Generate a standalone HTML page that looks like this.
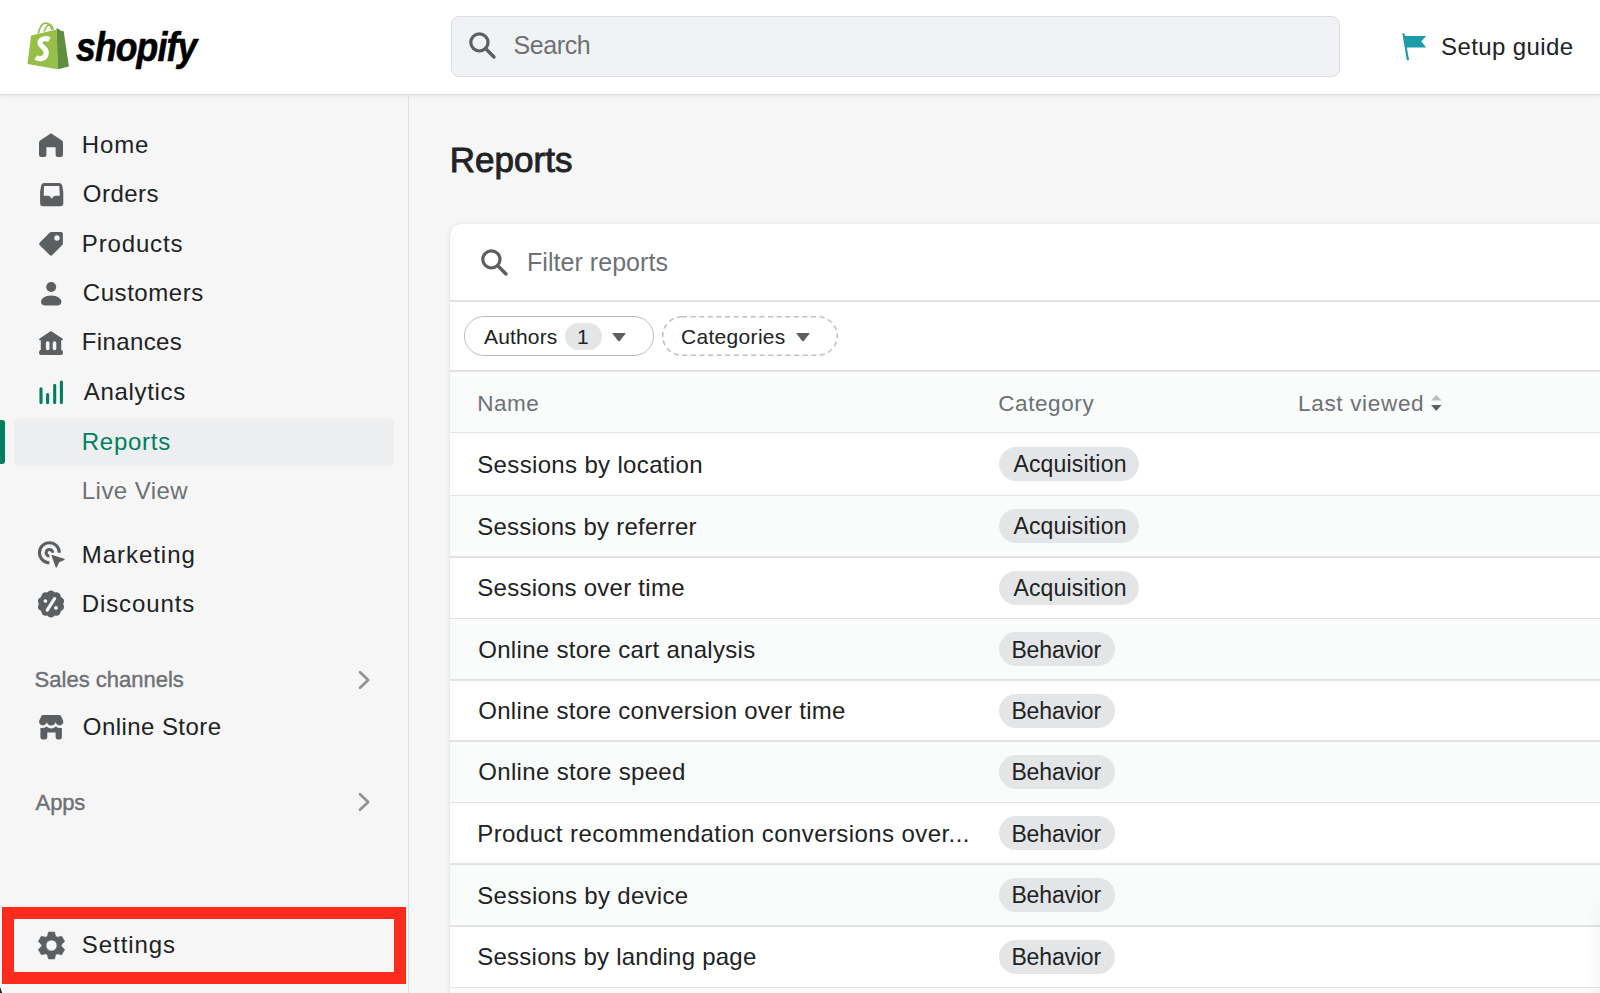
<!DOCTYPE html>
<html><head><meta charset="utf-8"><style>
*{margin:0;padding:0;box-sizing:border-box}
html,body{width:1600px;height:993px;overflow:hidden;background:#f6f6f7;font-family:"Liberation Sans", sans-serif;color:#202223}
.t{position:absolute;white-space:nowrap}
.ic{position:absolute;overflow:visible}
#topbar{position:absolute;left:0;top:0;width:1600px;height:94px;background:#fff;box-shadow:0 1px 0 #d9dbde,0 2px 4px rgba(0,0,0,0.08)}
#searchbox{position:absolute;left:450.5px;top:15.5px;width:889.5px;height:61px;background:#f1f2f3;border:1.5px solid #dadde1;border-radius:8px}
#sideline{position:absolute;left:408px;top:94px;width:1.2px;height:899px;background:#dcdee2}
#sel{position:absolute;left:14px;top:418px;width:380px;height:48px;background:#edeeef;border-radius:6px}
#bar{position:absolute;left:0;top:420px;width:5px;height:44px;background:#007f5f;border-radius:0 3px 3px 0}
#redbox{position:absolute;left:2px;top:907px;width:404px;height:77px;border:12px solid #fd2a1e}
#card{position:absolute;left:449.5px;top:223.5px;width:1200px;height:900px;background:#fff;border-radius:10.5px 0 0 0;box-shadow:0 0 1px rgba(63,63,68,0.25),0 1px 5px rgba(63,63,68,0.10)}
#thead{position:absolute;left:450px;top:371px;width:1150px;height:61.4px;background:#fafbfb}
.rowbg{position:absolute;left:450px;width:1150px;background:#fafbfb}
.div{position:absolute;left:450px;width:1150px;height:1.5px;background:#e1e3e5}
.badge{position:absolute;left:999px;height:34px;background:#e4e5e7;border-radius:17px}
#chip1{position:absolute;left:464.4px;top:315.8px;width:190px;height:40.2px;border:1.6px solid #babfc3;border-radius:21px}
#fab{position:absolute;left:1606px;top:895px;width:60px;height:150px;border-radius:30px;background:#fff;box-shadow:0 0 22px 4px rgba(0,0,0,0.07)}
#chip1b{position:absolute;left:564.6px;top:322.6px;width:37.4px;height:27px;background:#e4e5e7;border-radius:14px}
#chip2{position:absolute;left:662.4px;top:316.2px;width:176px;height:40px;overflow:visible}
#logo{position:absolute;left:76px;top:27.30px;font:italic 700 40px/1 "Liberation Sans",sans-serif;color:#000;letter-spacing:-1px;white-space:nowrap;-webkit-text-stroke:0.6px #000;transform:scaleX(0.89);transform-origin:0 0}
</style></head><body>
<div id="topbar"></div>
<div id="searchbox"></div>
<div id="sideline"></div>
<div id="sel"></div>
<div id="bar"></div>
<div id="redbox"></div>
<div id="card"></div>
<div id="thead"></div>
<div class="badge" style="top:446.95px;width:140px"></div>
<div class="rowbg" style="top:495.50px;height:61.30px"></div>
<div class="badge" style="top:509.15px;width:140px"></div>
<div class="badge" style="top:570.65px;width:140px"></div>
<div class="rowbg" style="top:618.50px;height:61.70px"></div>
<div class="badge" style="top:632.35px;width:116px"></div>
<div class="badge" style="top:693.60px;width:116px"></div>
<div class="rowbg" style="top:741.00px;height:61.60px"></div>
<div class="badge" style="top:754.80px;width:116px"></div>
<div class="badge" style="top:816.40px;width:116px"></div>
<div class="rowbg" style="top:864.20px;height:61.60px"></div>
<div class="badge" style="top:878.00px;width:116px"></div>
<div class="badge" style="top:939.65px;width:116px"></div>
<div class="rowbg" style="top:987.5px;height:10px"></div>
<div class="div" style="top:431.65px"></div>
<div class="div" style="top:494.75px"></div>
<div class="div" style="top:556.05px"></div>
<div class="div" style="top:617.75px"></div>
<div class="div" style="top:679.45px"></div>
<div class="div" style="top:740.25px"></div>
<div class="div" style="top:801.85px"></div>
<div class="div" style="top:863.45px"></div>
<div class="div" style="top:925.05px"></div>
<div class="div" style="top:986.75px"></div>
<div class="div" style="top:300.25px"></div>
<div class="div" style="top:370.25px"></div>
<div id="fab"></div>
<svg style="position:absolute;left:0;top:986px;width:4px;height:7px" viewBox="0 0 4 7"><path d="M0 1 L2.2 7 H0 Z" fill="#0b2338"/></svg>
<div id="chip1"></div>
<div id="chip1b"></div>
<svg id="chip2" viewBox="0 0 176 40"><rect x="0.75" y="0.75" width="174.5" height="38.5" rx="19.25" fill="none" stroke="#bec2c7" stroke-width="1.6" stroke-dasharray="5 3.6"/></svg>
<div id="logo">shopify</div>
<svg class="ic" style="left:39px;top:133px;width:24px;height:24px;" viewBox="0 0 24 24"><path fill="#5c5f62" d="M12 0.3 L22.9 7.4 Q24 8.1 24 9.5 V21.8 Q24 24 21.8 24 H18.6 Q16.6 24 16.6 22 V14.2 H7.4 V22 Q7.4 24 5.4 24 H2.2 Q0 24 0 21.8 V9.5 Q0 8.1 1.1 7.4 Z"/></svg>
<svg class="ic" style="left:39.5px;top:182.7px;width:23.4px;height:23.2px;" viewBox="0 0 24 24"><path fill="#5c5f62" fill-rule="evenodd" d="M4.5 0 H19.5 Q22.3 0 23 3 L24 9 V21 Q24 24 21 24 H3 Q0 24 0 21 V9 L1 3 Q1.7 0 4.5 0 Z M4.2 3 L3.6 13.3 H8.5 Q10.3 13.5 12 16.4 Q13.7 13.5 15.5 13.3 H20.4 L19.8 3 Z"/></svg>
<svg class="ic" style="left:39px;top:232.2px;width:24px;height:23.8px;" viewBox="0 0 24 24"><path fill="#5c5f62" fill-rule="evenodd" d="M12.3 0 H22.3 Q24 0 24 1.7 V11.8 Q24 12.6 23.4 13.2 L13.3 23.3 Q12 24.5 10.7 23.3 L0.7 13.3 Q-0.5 12 0.7 10.7 L10.8 0.6 Q11.4 0 12.3 0 Z M18 3.3 A2.7 2.7 0 1 0 18 8.7 A2.7 2.7 0 1 0 18 3.3 Z"/></svg>
<svg class="ic" style="left:40.9px;top:281.6px;width:20.4px;height:23.4px;" viewBox="0 0 20.4 23.4"><circle fill="#5c5f62" cx="10.2" cy="5" r="5"/><path fill="#5c5f62" d="M10.2 13.4 C16.5 13.4 20.4 16.6 20.4 19.6 Q20.4 23.4 16.8 23.4 H3.6 Q0 23.4 0 19.6 C0 16.6 3.9 13.4 10.2 13.4 Z"/></svg>
<svg class="ic" style="left:39px;top:331px;width:24px;height:24px;" viewBox="0 0 24 24"><path fill="#5c5f62" fill-rule="evenodd" d="M12 0 L23.4 7.6 Q24.4 8.4 23.6 9.2 H22.2 V19 H22.6 Q24 19.4 24 21.4 Q24 24 22 24 H2 Q0 24 0 21.4 Q0 19.4 1.4 19 H1.8 V9.2 H0.4 Q-0.4 8.4 0.6 7.6 Z M8.7 10.2 Q6.9 10.2 6.9 12 V17.5 Q6.9 19.3 8.7 19.3 Q10.5 19.3 10.5 17.5 V12 Q10.5 10.2 8.7 10.2 Z M15.5 10.2 Q13.7 10.2 13.7 12 V17.5 Q13.7 19.3 15.5 19.3 Q17.3 19.3 17.3 17.5 V12 Q17.3 10.2 15.5 10.2 Z"/></svg>
<svg class="ic" style="left:39px;top:380px;width:24.5px;height:24.5px;" viewBox="0 0 24.5 24.5"><g stroke="#007f5f" stroke-width="3.1" stroke-linecap="round"><line x1="2" y1="8.8" x2="2" y2="22.6"/><line x1="8.6" y1="14.6" x2="8.6" y2="22.6"/><line x1="15.7" y1="5.4" x2="15.7" y2="22.6"/><line x1="22.4" y1="2" x2="22.4" y2="22.6"/></g></svg>
<svg class="ic" style="left:34px;top:537px;width:34px;height:34px;" viewBox="0 0 34 34"><g fill="none" stroke="#5c5f62" stroke-width="3.1"><path d="M15.4 25.7 A9.95 9.95 0 1 1 25.35 15.75"/><path d="M15.4 19.0 A3.25 3.25 0 1 1 18.65 15.75"/></g><path fill="#5c5f62" stroke="#5c5f62" stroke-width="1.3" stroke-linejoin="round" d="M18.1 18.5 L30 22.3 L24.7 24.7 L22.3 30 Z"/></svg>
<svg class="ic" style="left:36.8px;top:589.5px;width:28px;height:28px;" viewBox="0 0 28 28"><path fill="#5c5f62" d="M14.00 0.55 L14.53 0.59 L15.05 0.69 L15.55 0.87 L16.04 1.11 L16.51 1.40 L16.95 1.73 L17.36 2.10 L17.74 2.49 L18.28 2.40 L18.83 2.34 L19.38 2.33 L19.93 2.37 L20.46 2.46 L20.97 2.62 L21.46 2.84 L21.91 3.12 L22.31 3.46 L22.67 3.85 L22.98 4.29 L23.23 4.77 L23.44 5.28 L23.59 5.81 L23.71 6.35 L23.79 6.89 L24.28 7.13 L24.76 7.41 L25.21 7.72 L25.63 8.07 L26.01 8.46 L26.33 8.89 L26.59 9.35 L26.79 9.84 L26.92 10.36 L26.98 10.88 L26.97 11.42 L26.89 11.96 L26.76 12.49 L26.58 13.01 L26.35 13.51 L26.10 14.00 L26.35 14.49 L26.58 14.99 L26.76 15.51 L26.89 16.04 L26.97 16.58 L26.98 17.12 L26.92 17.64 L26.79 18.16 L26.59 18.65 L26.33 19.11 L26.01 19.54 L25.63 19.93 L25.21 20.28 L24.76 20.59 L24.28 20.87 L23.79 21.11 L23.71 21.65 L23.59 22.19 L23.44 22.72 L23.23 23.23 L22.98 23.71 L22.67 24.15 L22.31 24.54 L21.91 24.88 L21.46 25.16 L20.97 25.38 L20.46 25.54 L19.93 25.63 L19.38 25.67 L18.83 25.66 L18.28 25.60 L17.74 25.51 L17.36 25.90 L16.95 26.27 L16.51 26.60 L16.04 26.89 L15.55 27.13 L15.05 27.31 L14.53 27.41 L14.00 27.45 L13.47 27.41 L12.95 27.31 L12.45 27.13 L11.96 26.89 L11.49 26.60 L11.05 26.27 L10.64 25.90 L10.26 25.51 L9.72 25.60 L9.17 25.66 L8.62 25.67 L8.07 25.63 L7.54 25.54 L7.03 25.38 L6.54 25.16 L6.09 24.88 L5.69 24.54 L5.33 24.15 L5.02 23.71 L4.77 23.23 L4.56 22.72 L4.41 22.19 L4.29 21.65 L4.21 21.11 L3.72 20.87 L3.24 20.59 L2.79 20.28 L2.37 19.93 L1.99 19.54 L1.67 19.11 L1.41 18.65 L1.21 18.16 L1.08 17.64 L1.02 17.12 L1.03 16.58 L1.11 16.04 L1.24 15.51 L1.42 14.99 L1.65 14.49 L1.90 14.00 L1.65 13.51 L1.42 13.01 L1.24 12.49 L1.11 11.96 L1.03 11.42 L1.02 10.88 L1.08 10.36 L1.21 9.84 L1.41 9.35 L1.67 8.89 L1.99 8.46 L2.37 8.07 L2.79 7.72 L3.24 7.41 L3.72 7.13 L4.21 6.89 L4.29 6.35 L4.41 5.81 L4.56 5.28 L4.77 4.77 L5.02 4.29 L5.33 3.85 L5.69 3.46 L6.09 3.12 L6.54 2.84 L7.03 2.62 L7.54 2.46 L8.07 2.37 L8.62 2.33 L9.17 2.34 L9.72 2.40 L10.26 2.49 L10.64 2.10 L11.05 1.73 L11.49 1.40 L11.96 1.11 L12.45 0.87 L12.95 0.69 L13.47 0.59 Z"/><line x1="17.6" y1="8.6" x2="10.2" y2="20.2" stroke="#f6f6f7" stroke-width="3.2" stroke-linecap="round"/><circle cx="8.4" cy="11" r="1.85" fill="#f6f6f7"/><circle cx="19" cy="17.9" r="1.85" fill="#f6f6f7"/></svg>
<svg class="ic" style="left:38.9px;top:714.5px;width:24.4px;height:24.4px;" viewBox="0 0 24.4 24.4"><path fill="#5c5f62" d="M4 0 H20.2 Q21.5 0 22 1 L24.1 5.6 Q24.8 7.8 23.6 9.1 Q22.3 10.4 20.4 10.4 Q18.2 10.4 17 8.3 L16.5 7.0 Q16 10.4 12.2 10.4 Q8.4 10.4 7.9 7.0 L7.4 8.3 Q6.2 10.4 4 10.4 Q2.1 10.4 0.8 9.1 Q-0.4 7.8 0.3 5.6 L2.4 1 Q2.9 0 4 0 Z"/><path fill="#5c5f62" d="M1.4 12.8 Q5 13.6 7.6 11.4 Q9.6 13.4 12.2 13.4 Q14.8 13.4 16.8 11.4 Q19.4 13.6 22.9 12.8 V22.3 Q22.9 24.4 20.8 24.4 H18.7 Q16.6 24.4 16.6 22.3 V17.6 H8.3 V22.3 Q8.3 24.4 6.2 24.4 H3.4 Q1.4 24.4 1.4 22.3 Z"/></svg>
<svg class="ic" style="left:36.6px;top:930.9px;width:29px;height:29px;" viewBox="0 0 28 28"><path fill="#5c5f62" fill-rule="evenodd" stroke="#5c5f62" stroke-width="0.6" stroke-linejoin="round" d="M10.27 4.08 L11.10 1.02 L16.90 1.02 L17.73 4.08 Q18.20 6.73 20.72 5.81 L23.79 5.00 L26.69 10.02 L24.46 12.27 Q22.40 14.00 24.46 15.73 L26.69 17.98 L23.79 23.00 L20.72 22.19 Q18.20 21.27 17.73 23.92 L16.90 26.98 L11.10 26.98 L10.27 23.92 Q9.80 21.27 7.28 22.19 L4.21 23.00 L1.31 17.98 L3.54 15.73 Q5.60 14.00 3.54 12.27 L1.31 10.02 L4.21 5.00 L7.28 5.81 Q9.80 6.73 10.27 4.08 Z M14 8.7 A5.3 5.3 0 1 0 14 19.3 A5.3 5.3 0 1 0 14 8.7 Z"/></svg>
<svg class="ic" style="left:357px;top:669.5px;width:15px;height:20px;" viewBox="0 0 15 20"><path d="M3 2.2 L11.2 10 L3 17.8" fill="none" stroke="#8c9196" stroke-width="2.6" stroke-linecap="round" stroke-linejoin="round"/></svg>
<svg class="ic" style="left:357px;top:792px;width:15px;height:20px;" viewBox="0 0 15 20"><path d="M3 2.2 L11.2 10 L3 17.8" fill="none" stroke="#8c9196" stroke-width="2.6" stroke-linecap="round" stroke-linejoin="round"/></svg>
<svg class="ic" style="left:469px;top:32.4px;width:27px;height:27px;" viewBox="0 0 27 27"><circle cx="10.4" cy="10.4" r="8.6" fill="none" stroke="#5c5f62" stroke-width="3.2"/><line x1="16.8" y1="16.8" x2="25" y2="25" stroke="#5c5f62" stroke-width="3.4" stroke-linecap="round"/></svg>
<svg class="ic" style="left:481px;top:249px;width:27px;height:27px;" viewBox="0 0 27 27"><circle cx="10.4" cy="10.4" r="8.6" fill="none" stroke="#5c5f62" stroke-width="3.2"/><line x1="16.8" y1="16.8" x2="25" y2="25" stroke="#5c5f62" stroke-width="3.4" stroke-linecap="round"/></svg>
<svg class="ic" style="left:1402px;top:32.5px;width:25px;height:27.5px;" viewBox="0 0 25 27.5"><path fill="#1c9ba8" d="M0.3 0 L2.4 0.4 L3 3 H24.2 L19.3 8.6 L24.2 14.6 H4.8 L7 26.4 Q7.1 27.5 6 27.5 Q5 27.5 4.7 26.5 Z"/></svg>
<svg class="ic" style="left:612px;top:332.6px;width:14px;height:8.6px;" viewBox="0 0 14 8.6"><path fill="#5c5f62" d="M0.8 0 H13.2 Q14 0 13.4 0.8 L7.8 8.0 Q7.0 8.799999999999999 6.2 8.0 L0.6 0.8 Q0 0 0.8 0 Z"/></svg>
<svg class="ic" style="left:795.8px;top:332.8px;width:14px;height:8.6px;" viewBox="0 0 14 8.6"><path fill="#5c5f62" d="M0.8 0 H13.2 Q14 0 13.4 0.8 L7.8 8.0 Q7.0 8.799999999999999 6.2 8.0 L0.6 0.8 Q0 0 0.8 0 Z"/></svg>
<svg class="ic" style="left:1431px;top:395px;width:10.5px;height:16px;" viewBox="0 0 10.5 16"><path fill="#babec3" d="M5.25 0 L10.5 5.6 H0 Z"/><path fill="#5c5f62" d="M0 10 H10.5 L5.25 16 Z"/></svg>
<svg class="ic" style="left:27px;top:21.5px;width:42px;height:48px;" viewBox="0 0 42 48">
<path fill="#95bf47" d="M4.1 13.4 L29.6 7.6 L30.8 47.2 L0.4 42 Z"/>
<path fill="#5e8e3e" d="M29.6 6 L32 7.2 Q33.5 9 36.7 9.3 L41.9 44.4 L30.8 47.2 Z"/>
<path fill="none" stroke="#95bf47" stroke-width="1.7" d="M11.2 11.5 Q13.5 1 18.8 1.2 Q24.2 1.5 26.6 7.5"/>
<path fill="none" stroke="#95bf47" stroke-width="1.7" d="M17.2 9.6 Q19.5 2.6 22.4 3 Q24.4 3.5 24.6 8"/>
<path fill="none" stroke="#fff" stroke-width="5.1" d="M22.4 17.6 C19.2 15.9, 13.1 16.3, 13 20.9 C12.9 24.6, 19.4 25.4, 19.2 30.8 C19 36.8, 12.4 37.9, 8.8 35.4"/>
</svg>
<div class="t" id="setup" style="left:1441.00px;top:34.88px;font-size:24px;line-height:24px;color:#202223;font-weight:400;letter-spacing:0.400px;">Setup guide</div>
<div class="t" id="search" style="left:513.50px;top:33.34px;font-size:25px;line-height:25px;color:#6d7175;font-weight:400;letter-spacing:-0.400px;">Search</div>
<div class="t" id="home" style="left:81.80px;top:132.88px;font-size:24px;line-height:24px;color:#202223;font-weight:400;letter-spacing:0.867px;">Home</div>
<div class="t" id="orders" style="left:82.80px;top:182.28px;font-size:24px;line-height:24px;color:#202223;font-weight:400;letter-spacing:0.480px;">Orders</div>
<div class="t" id="products" style="left:81.80px;top:231.68px;font-size:24px;line-height:24px;color:#202223;font-weight:400;letter-spacing:0.857px;">Products</div>
<div class="t" id="customers" style="left:82.80px;top:281.08px;font-size:24px;line-height:24px;color:#202223;font-weight:400;letter-spacing:0.550px;">Customers</div>
<div class="t" id="finances" style="left:81.80px;top:330.48px;font-size:24px;line-height:24px;color:#202223;font-weight:400;letter-spacing:0.371px;">Finances</div>
<div class="t" id="analytics" style="left:83.80px;top:380.18px;font-size:24px;line-height:24px;color:#202223;font-weight:400;letter-spacing:0.675px;">Analytics</div>
<div class="t" id="reports" style="left:81.80px;top:429.98px;font-size:24px;line-height:24px;color:#007f5f;font-weight:400;letter-spacing:0.733px;">Reports</div>
<div class="t" id="liveview" style="left:81.80px;top:479.08px;font-size:24px;line-height:24px;color:#6d7175;font-weight:400;letter-spacing:0.450px;">Live View</div>
<div class="t" id="marketing" style="left:81.80px;top:542.78px;font-size:24px;line-height:24px;color:#202223;font-weight:400;letter-spacing:0.950px;">Marketing</div>
<div class="t" id="discounts" style="left:81.80px;top:592.18px;font-size:24px;line-height:24px;color:#202223;font-weight:400;letter-spacing:0.887px;">Discounts</div>
<div class="t" id="onlinestore" style="left:82.80px;top:714.68px;font-size:24px;line-height:24px;color:#202223;font-weight:400;letter-spacing:0.436px;">Online Store</div>
<div class="t" id="settings" style="left:81.80px;top:933.48px;font-size:24px;line-height:24px;color:#202223;font-weight:400;letter-spacing:0.943px;">Settings</div>
<div class="t" id="saleschannels" style="left:34.60px;top:668.98px;font-size:22px;line-height:22px;color:#6d7175;font-weight:400;letter-spacing:0.000px;-webkit-text-stroke:0.4px #6d7175;">Sales channels</div>
<div class="t" id="apps" style="left:35.60px;top:791.78px;font-size:22px;line-height:22px;color:#6d7175;font-weight:400;letter-spacing:-0.133px;-webkit-text-stroke:0.4px #6d7175;">Apps</div>
<div class="t" id="heading" style="left:449.80px;top:141.97px;font-size:35px;line-height:35px;color:#202223;font-weight:400;letter-spacing:0.033px;-webkit-text-stroke:0.9px #202223;">Reports</div>
<div class="t" id="filter" style="left:527.00px;top:250.34px;font-size:25px;line-height:25px;color:#6d7175;font-weight:400;letter-spacing:0.046px;">Filter reports</div>
<div class="t" id="authors" style="left:484.00px;top:325.92px;font-size:21px;line-height:21px;color:#202223;font-weight:400;letter-spacing:0.167px;">Authors</div>
<div class="t" id="categories" style="left:681.00px;top:325.92px;font-size:21px;line-height:21px;color:#202223;font-weight:400;letter-spacing:0.311px;">Categories</div>
<div class="t" id="hname" style="left:477.25px;top:392.55px;font-size:22.5px;line-height:22.5px;color:#6d7175;font-weight:400;letter-spacing:0.500px;">Name</div>
<div class="t" id="hcat" style="left:998.20px;top:392.55px;font-size:22.5px;line-height:22.5px;color:#6d7175;font-weight:400;letter-spacing:0.600px;">Category</div>
<div class="t" id="hlast" style="left:1298.00px;top:392.55px;font-size:22.5px;line-height:22.5px;color:#6d7175;font-weight:400;letter-spacing:0.680px;">Last viewed</div>
<div class="t" id="row0" style="left:477.25px;top:452.53px;font-size:24px;line-height:24px;color:#202223;font-weight:400;letter-spacing:0.342px;">Sessions by location</div>
<div class="t" id="badge0" style="left:1013.40px;top:453.28px;font-size:23px;line-height:23px;color:#202223;font-weight:400;letter-spacing:0.180px;">Acquisition</div>
<div class="t" id="row1" style="left:477.25px;top:514.73px;font-size:24px;line-height:24px;color:#202223;font-weight:400;letter-spacing:0.237px;">Sessions by referrer</div>
<div class="t" id="badge1" style="left:1013.40px;top:515.48px;font-size:23px;line-height:23px;color:#202223;font-weight:400;letter-spacing:0.180px;">Acquisition</div>
<div class="t" id="row2" style="left:477.25px;top:576.23px;font-size:24px;line-height:24px;color:#202223;font-weight:400;letter-spacing:0.265px;">Sessions over time</div>
<div class="t" id="badge2" style="left:1013.40px;top:576.98px;font-size:23px;line-height:23px;color:#202223;font-weight:400;letter-spacing:0.180px;">Acquisition</div>
<div class="t" id="row3" style="left:478.25px;top:637.93px;font-size:24px;line-height:24px;color:#202223;font-weight:400;letter-spacing:0.300px;">Online store cart analysis</div>
<div class="t" id="badge3" style="left:1011.40px;top:638.68px;font-size:23px;line-height:23px;color:#202223;font-weight:400;letter-spacing:-0.143px;">Behavior</div>
<div class="t" id="row4" style="left:478.25px;top:699.18px;font-size:24px;line-height:24px;color:#202223;font-weight:400;letter-spacing:0.303px;">Online store conversion over time</div>
<div class="t" id="badge4" style="left:1011.40px;top:699.93px;font-size:23px;line-height:23px;color:#202223;font-weight:400;letter-spacing:-0.143px;">Behavior</div>
<div class="t" id="row5" style="left:478.25px;top:760.38px;font-size:24px;line-height:24px;color:#202223;font-weight:400;letter-spacing:0.335px;">Online store speed</div>
<div class="t" id="badge5" style="left:1011.40px;top:761.13px;font-size:23px;line-height:23px;color:#202223;font-weight:400;letter-spacing:-0.143px;">Behavior</div>
<div class="t" id="row6" style="left:477.25px;top:821.98px;font-size:24px;line-height:24px;color:#202223;font-weight:400;letter-spacing:0.422px;">Product recommendation conversions over...</div>
<div class="t" id="badge6" style="left:1011.40px;top:822.73px;font-size:23px;line-height:23px;color:#202223;font-weight:400;letter-spacing:-0.143px;">Behavior</div>
<div class="t" id="row7" style="left:477.25px;top:883.58px;font-size:24px;line-height:24px;color:#202223;font-weight:400;letter-spacing:0.324px;">Sessions by device</div>
<div class="t" id="badge7" style="left:1011.40px;top:884.33px;font-size:23px;line-height:23px;color:#202223;font-weight:400;letter-spacing:-0.143px;">Behavior</div>
<div class="t" id="row8" style="left:477.25px;top:945.23px;font-size:24px;line-height:24px;color:#202223;font-weight:400;letter-spacing:0.239px;">Sessions by landing page</div>
<div class="t" id="badge8" style="left:1011.40px;top:945.98px;font-size:23px;line-height:23px;color:#202223;font-weight:400;letter-spacing:-0.143px;">Behavior</div>
<div class="t" style="left:577px;top:325.92px;font-size:21px;line-height:21px">1</div>
</body></html>
